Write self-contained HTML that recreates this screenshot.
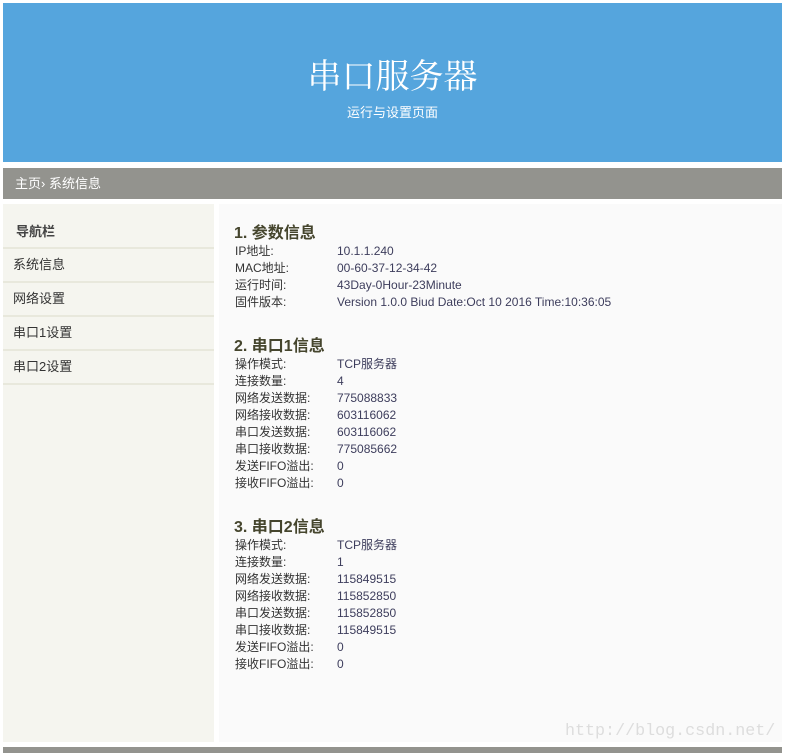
<!DOCTYPE html><html><head><meta charset="utf-8"><style>
body{margin:0;width:785px;height:753px;background:#fff;position:relative;font-family:"Liberation Sans","Noto Sans CJK SC",sans-serif;font-size:12px;overflow:hidden}
.hd{position:absolute;left:3px;top:3px;width:779px;height:159px;background:#55a5dd;color:#fff;text-align:center}
.hd h1{margin:0;position:absolute;top:50px;width:100%;font-weight:normal;font-size:34px;line-height:42px;font-family:"Noto Serif CJK SC",serif}
.hd p{margin:0;position:absolute;top:99px;width:100%;font-size:13px}
.bar{position:absolute;left:3px;top:168px;width:779px;height:31px;background:#93938e;color:#fff;font-size:13px;line-height:31px;text-indent:12px}
.sb{position:absolute;left:3px;top:204px;width:211px;height:538px;background:#f5f5ef}
.sb div{height:32px;border-bottom:2px solid #e8e8dc;line-height:32px;padding-left:10px;color:#333;font-size:13px}
.sb .t{font-weight:bold;margin-top:13px;height:30px;line-height:30px;padding-left:13px;color:#444}
.ct{position:absolute;left:219px;top:204px;width:563px;height:538px;background:#fafafa;color:#333}
.ct h2{margin:0;position:absolute;left:15px;font-size:16px;color:#45452d;font-weight:bold}
.r{position:absolute;left:16px;line-height:17px}
.r b{font-weight:normal;display:inline-block;width:102px}
.r span{color:#3d3d5c}
.wm{position:absolute;left:565px;top:722px;font-family:"Liberation Mono",monospace;font-size:16.7px;color:#ddd}
.ft{position:absolute;left:3px;top:747px;width:779px;height:6px;background:#93938e}
</style></head><body>
<div class="hd"><h1>串口服务器</h1><p>运行与设置页面</p></div>
<div class="bar">主页› 系统信息</div>
<div class="sb"><div class="t">导航栏</div><div>系统信息</div><div>网络设置</div><div>串口1设置</div><div>串口2设置</div></div>
<div class="ct">
<h2 style="top:15px">1. 参数信息</h2>
<div class="r" style="top:39px"><b>IP地址:</b><span>10.1.1.240</span><br><b>MAC地址:</b><span>00-60-37-12-34-42</span><br><b>运行时间:</b><span>43Day-0Hour-23Minute</span><br><b>固件版本:</b><span>Version 1.0.0 Biud Date:Oct 10 2016 Time:10:36:05</span></div>
<h2 style="top:128px">2. 串口1信息</h2>
<div class="r" style="top:152px"><b>操作模式:</b><span>TCP服务器</span><br><b>连接数量:</b><span>4</span><br><b>网络发送数据:</b><span>775088833</span><br><b>网络接收数据:</b><span>603116062</span><br><b>串口发送数据:</b><span>603116062</span><br><b>串口接收数据:</b><span>775085662</span><br><b>发送FIFO溢出:</b><span>0</span><br><b>接收FIFO溢出:</b><span>0</span></div>
<h2 style="top:309px">3. 串口2信息</h2>
<div class="r" style="top:333px"><b>操作模式:</b><span>TCP服务器</span><br><b>连接数量:</b><span>1</span><br><b>网络发送数据:</b><span>115849515</span><br><b>网络接收数据:</b><span>115852850</span><br><b>串口发送数据:</b><span>115852850</span><br><b>串口接收数据:</b><span>115849515</span><br><b>发送FIFO溢出:</b><span>0</span><br><b>接收FIFO溢出:</b><span>0</span></div>
</div>
<div class="wm">http://blog.csdn.net/</div>
<div class="ft"></div>
</body></html>
